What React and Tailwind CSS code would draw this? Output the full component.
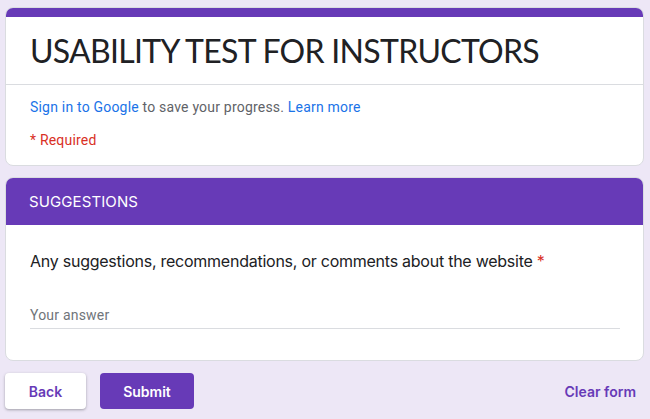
export default function App() {
  const lato = { fontFamily: "Lato, Inter, sans-serif" };
  const inter = { fontFamily: "Inter, 'Open Sans', sans-serif" };
  return (
    <div className="w-[650px] h-[419px] bg-[#ede7f6] overflow-hidden" style={{ fontFamily: "Roboto, 'Liberation Sans', sans-serif" }}>
      <div className="pl-[5px] pr-[6px] pt-[7px]">
        {/* Card 1 */}
        <div className="rounded-lg bg-white border border-[#dadce0] overflow-hidden">
          <div className="h-[10px] bg-[#673ab7] -mx-px -mt-px" />
          <div className="h-[68px] flex items-center px-6 border-b border-[#dadce0]">
            <h1 className="text-[32px] leading-none text-[#202124] tracking-[-0.7px]" style={lato}>
              USABILITY TEST FOR INSTRUCTORS
            </h1>
          </div>
          <div className="px-6 pt-[12px] pb-[15px] text-[14px] leading-[20px] tracking-[0.2px]">
            <div className="text-[#5f6368]">
              <span className="text-[#1a73e8]">Sign in to Google</span> to save your progress.{" "}
              <span className="text-[#1a73e8]">Learn more</span>
            </div>
            <div className="text-[#d93025] mt-[13px]">* Required</div>
          </div>
        </div>

        {/* Card 2 */}
        <div className="mt-[11px] rounded-lg bg-white border border-[#dadce0] overflow-hidden">
          <div className="h-[48px] bg-[#673ab7] -mx-px -mt-px flex items-center px-6 pt-[2px] text-white text-[15px] tracking-[0.1px]" style={inter}>
            SUGGESTIONS
          </div>
          <div className="px-6 pt-[24px] pb-[31px]">
            <div className="text-[16px] leading-[24px] text-[#202124] tracking-[-0.25px]" style={inter}>
              Any suggestions, recommendations, or comments about the website <span className="text-[#d93025]">*</span>
            </div>
            <div className="mt-[32px] w-[590px] border-b border-[#dadce0] pb-[3px] text-[14px] leading-[20px] tracking-[0.2px] text-[#70757a]">
              Your answer
            </div>
          </div>
        </div>

        {/* Buttons */}
        <div className="mt-[12px] flex items-center">
          <button className="h-[36px] w-[81px] rounded bg-white text-[#673ab7] text-[14px] font-semibold shadow-[0_1px_3px_rgba(60,64,67,0.3),0_1px_2px_rgba(60,64,67,0.15)]" style={inter}>
            Back
          </button>
          <button className="ml-[14px] h-[36px] w-[94px] rounded bg-[#673ab7] text-white text-[14px] font-semibold" style={inter}>
            Submit
          </button>
          <div className="ml-auto mr-[8px] text-[14px] font-semibold text-[#673ab7]" style={inter}>
            Clear form
          </div>
        </div>
      </div>
    </div>
  );
}
